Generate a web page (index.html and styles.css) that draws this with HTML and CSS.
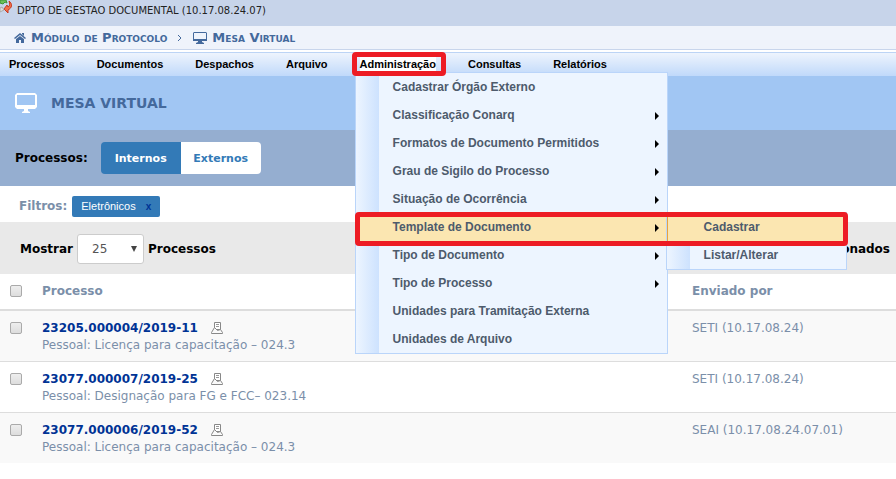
FILE: index.html
```html
<!DOCTYPE html>
<html lang="pt-BR">
<head>
    <meta charset="UTF-8">
    <meta name="viewport" content="width=device-width, initial-scale=1.0">
    <title>Mesa Virtual</title>
    <link rel="stylesheet" href="styles.css">
</head>
<body>
    <header class="unidade">
        <svg class="icone-unidade" width="12" height="14" viewBox="0 0 12 14" aria-hidden="true">
            <path d="M0 0h6l1 3-2-1-2 2-3-1z" fill="#6cc05a" stroke="#3d9637"/>
            <path d="M9 1c4 3 3 7-1 9v3L4 9l3-4 1 2c2-1 2-3 1-6z" fill="#f2704a" stroke="#c53a22"/>
            <path d="M0 8l2-1 2 3-4 2z" fill="#ddd" stroke="#aaa"/>
        </svg>
        <span>DPTO DE GESTAO DOCUMENTAL (10.17.08.24.07)</span>
    </header>

    <div class="caminho">
        <svg width="12" height="12" viewBox="0 0 12 12" aria-hidden="true">
            <path d="M6 1l6 5-1 1-5-4-5 4-1-1zM8 1h2v3L8 2z" fill="#44699c"/>
            <path d="M6 4l4 3v4H7V8H5v3H2V7z" fill="#44699c"/>
        </svg>
        <a href="#">Módulo de Protocolo</a>
        <svg class="seta-caminho" width="6" height="8" viewBox="0 0 6 8" aria-hidden="true">
            <path d="M1 1l3 3-3 3" fill="none" stroke="#44699c"/>
        </svg>
        <svg width="14" height="12" viewBox="0 0 14 12" aria-hidden="true">
            <path d="M1 0h12l1 1v8H0V1zM1 1v6h12V1zM5 9h4v1l2 1v1H3v-1l2-1z" fill="#44699c" fill-rule="evenodd"/>
        </svg>
        <a href="#">Mesa Virtual</a>
    </div>

    <nav class="menu">
        <ul class="menu-barra">
            <li><a href="#">Processos</a></li>
            <li><a href="#">Documentos</a></li>
            <li><a href="#">Despachos</a></li>
            <li><a href="#">Arquivo</a></li>
            <li class="aberto">
                <a href="#">Administração</a>
                <ul class="submenu submenu-admin">
                    <li><a href="#">Cadastrar Órgão Externo</a></li>
                    <li class="com-filhos"><a href="#">Classificação Conarq</a></li>
                    <li class="com-filhos"><a href="#">Formatos de Documento Permitidos</a></li>
                    <li class="com-filhos"><a href="#">Grau de Sigilo do Processo</a></li>
                    <li class="com-filhos"><a href="#">Situação de Ocorrência</a></li>
                    <li class="com-filhos ativo">
                        <a href="#">Template de Documento</a>
                        <ul class="submenu submenu-template">
                            <li class="ativo"><a href="#">Cadastrar</a></li>
                            <li><a href="#">Listar/Alterar</a></li>
                        </ul>
                        <span class="destaque destaque-item"></span>
                    </li>
                    <li class="com-filhos"><a href="#">Tipo de Documento</a></li>
                    <li class="com-filhos"><a href="#">Tipo de Processo</a></li>
                    <li><a href="#">Unidades para Tramitação Externa</a></li>
                    <li><a href="#">Unidades de Arquivo</a></li>
                </ul>
                <span class="destaque destaque-menu"></span>
            </li>
            <li><a href="#">Consultas</a></li>
            <li><a href="#">Relatórios</a></li>
        </ul>
    </nav>

    <main>
        <div class="titulo">
            <svg width="22" height="20" viewBox="0 0 22 20" aria-hidden="true">
                <path d="M2 0h18l2 2v12l-2 2H2l-2-2V2zM2 2v10h18V2zM9 16h4v2l2 1v1H7v-1l2-1z" fill="#fff" fill-rule="evenodd"/>
            </svg>
            <h1>MESA VIRTUAL</h1>
        </div>

        <div class="tipos">
            <span>Processos:</span>
            <div class="grupo-botoes">
                <button type="button" class="selecionado">Internos</button>
                <button type="button">Externos</button>
            </div>
        </div>

        <div class="filtros">
            <span>Filtros:</span>
            <span class="etiqueta">Eletrônicos <button type="button" aria-label="Remover filtro">x</button></span>
        </div>

        <div class="paginacao">
            <label for="quantidade">Mostrar</label>
            <div class="caixa-select">
                <select id="quantidade">
                    <option>10</option>
                    <option selected>25</option>
                    <option>50</option>
                </select>
            </div>
            <span>Processos</span>
            <span class="selecionados">Selecionados</span>
        </div>

        <table>
            <thead>
                <tr>
                    <th class="col-check"><input type="checkbox" aria-label="Selecionar todos"></th>
                    <th>Processo</th>
                    <th class="col-enviado">Enviado por</th>
                </tr>
            </thead>
            <tbody>
                <tr>
                    <td><input type="checkbox" aria-label="Selecionar 23205.000004/2019-11"></td>
                    <td>
                        <a href="#">23205.000004/2019-11</a>
                        <svg class="icone-doc" width="14" height="14" viewBox="0 0 14 14" aria-hidden="true"><use href="#doc"/></svg>
                        <p>Pessoal: Licença para capacitação – 024.3</p>
                    </td>
                    <td>SETI (10.17.08.24)</td>
                </tr>
                <tr>
                    <td><input type="checkbox" aria-label="Selecionar 23077.000007/2019-25"></td>
                    <td>
                        <a href="#">23077.000007/2019-25</a>
                        <svg class="icone-doc" width="14" height="14" viewBox="0 0 14 14" aria-hidden="true"><use href="#doc"/></svg>
                        <p>Pessoal: Designação para FG e FCC– 023.14</p>
                    </td>
                    <td>SETI (10.17.08.24)</td>
                </tr>
                <tr>
                    <td><input type="checkbox" aria-label="Selecionar 23077.000006/2019-52"></td>
                    <td>
                        <a href="#">23077.000006/2019-52</a>
                        <svg class="icone-doc" width="14" height="14" viewBox="0 0 14 14" aria-hidden="true"><use href="#doc"/></svg>
                        <p>Pessoal: Licença para capacitação – 024.3</p>
                    </td>
                    <td>SEAI (10.17.08.24.07.01)</td>
                </tr>
            </tbody>
        </table>
    </main>

    <!-- Ícone de documento reutilizado nas linhas -->
    <svg class="simbolos" aria-hidden="true">
        <symbol id="doc" viewBox="0 0 14 14">
            <path d="M4.500 1.500h6v7h-6z" fill="#fff" stroke="#888"/>
            <path d="M6 3.500h3M6 5.500h3" stroke="#999"/>
            <path d="M4.500 6.500l-3 5v1h11v-1l-2-3-3 1z" fill="#fafafa" stroke="#888"/>
        </symbol>
    </svg>
</body>
</html>
```
FILE: styles.css
```css
body {
    font-family: Verdana, "DejaVu Sans", sans-serif;
    font-size: 12px;
    line-height: 18px;
    margin: 0;
    background-color: #fff;
    color: #7b8fa9;
}
a {
    text-decoration: none;
}
ul {
    list-style: none;
    margin: 0;
    padding: 0;
}
.simbolos {
    display: block;
    width: 0;
    height: 0;
}

/* Topo */
.unidade {
    display: flex;
    align-items: flex-start;
    gap: 5px;
    height: 26px;
    background-color: #c7d4ea;
    color: #222;
    font-size: 10px;
    line-height: 22px;
}
.caminho {
    display: flex;
    align-items: center;
    gap: 5px;
    height: 23px;
    padding: 0 14px;
    background-color: #eff3fb;
    border-bottom: 1px solid #c8d5ec;
    font-size: 13px;
    font-variant: small-caps;
    font-weight: bold;
    line-height: 26px;
}
.caminho a {
    color: #44699c;
}
.seta-caminho {
    margin: 0 5px;
}

/* Menu */
.menu {
    margin-top: 2px;
    border-top: 1px solid #bcd4f5;
    background: linear-gradient(#eef4fd, #c0d9fa);
    font-family: Arial, "Liberation Sans", sans-serif;
    font-weight: bold;
}
.menu-barra {
    display: flex;
    gap: 32px;
    padding: 0 9px;
    font-size: 11px;
    line-height: 23px;
}
.menu-barra a {
    display: block;
    color: #000;
}
.aberto {
    position: relative;
    background-color: #fff;
}
.submenu {
    position: absolute;
    border: 1px solid #bad5fa;
    background: linear-gradient(to right, #edf5ff, #cde2fe) 0 0 / 23px 100% no-repeat #edf5ff;
    font-size: 12px;
    line-height: 28px;
}
.submenu-admin {
    top: 19px;
    left: -5px;
    width: 311px;
    z-index: 2;
}
.submenu a {
    padding-left: 37px;
    color: #4d5b6c;
}
.submenu li {
    position: relative;
}
.submenu .ativo {
    background-color: #fbe6b1;
}
.com-filhos::after {
    content: "";
    position: absolute;
    top: 11px;
    right: 8px;
    border: 4px solid transparent;
    border-right-width: 0;
    border-left-color: #000;
}
.submenu-template {
    top: -1px;
    left: 310px;
    width: 179px;
}
.submenu-template .ativo {
    border-left: 1px solid #e8a33d;
}
.submenu-template .ativo a {
    padding-left: 36px;
}
.destaque {
    position: absolute;
    border: 5px solid #ed1c24;
    border-radius: 4px;
    pointer-events: none;
    z-index: 3;
}
.destaque-menu {
    inset: -1px -10px 0 -8px;
}
.destaque-item {
    top: -1px;
    left: -1px;
    width: 483px;
    height: 24px;
}

/* Mesa virtual */
.titulo {
    display: flex;
    align-items: center;
    gap: 14px;
    height: 54px;
    padding: 0 15px;
    background-color: #a1c6f3;
}
h1 {
    margin: 0;
    color: #44699c;
    font-size: 14px;
}
.tipos {
    display: flex;
    align-items: center;
    gap: 13px;
    padding: 12px 15px;
    background-color: #95aed0;
    color: #000;
    font-weight: bold;
}
.grupo-botoes {
    display: flex;
    border-radius: 4px;
    overflow: hidden;
}
.grupo-botoes button {
    min-width: 80px;
    height: 32px;
    padding: 0 12px;
    border: 0;
    background-color: #fff;
    color: #337ab7;
    font: bold 11px Verdana, "DejaVu Sans", sans-serif;
}
.grupo-botoes .selecionado {
    background-color: #337ab7;
    color: #fff;
}
.filtros {
    display: flex;
    align-items: center;
    gap: 5px;
    height: 36px;
    padding: 4px 19px 0;
    box-sizing: border-box;
    font-weight: bold;
}
.etiqueta {
    display: flex;
    gap: 10px;
    padding: 0 9px;
    border-radius: 2px;
    background-color: #337ab7;
    color: #fff;
    font: 11px/21px Arial, "Liberation Sans", sans-serif;
}
.etiqueta button {
    padding: 0;
    border: 0;
    background: none;
    color: #003395;
    font: bold 10px Arial, "Liberation Sans", sans-serif;
}
.paginacao {
    display: flex;
    align-items: center;
    gap: 4px;
    height: 52px;
    padding: 2px 6px 0 20px;
    box-sizing: border-box;
    background-color: #e9e9e9;
    color: #000;
    font-weight: bold;
}
.caixa-select {
    position: relative;
}
.caixa-select::after {
    content: "";
    position: absolute;
    top: 12px;
    right: 7px;
    border: 3px solid transparent;
    border-top: 6px solid #444;
    border-bottom: 0;
}
select {
    appearance: none;
    width: 67px;
    height: 30px;
    padding: 0 14px;
    border: 1px solid #ccc;
    border-radius: 3px;
    background-color: #fff;
    color: #555;
    font: 12px Verdana, "DejaVu Sans", sans-serif;
}
.selecionados {
    margin-left: auto;
}

/* Tabela */
table {
    width: 100%;
    border-collapse: collapse;
    table-layout: fixed;
}
th, td {
    padding: 0;
    text-align: left;
    vertical-align: top;
}
th {
    height: 27px;
    padding-top: 8px;
    border-bottom: 2px solid #ddd;
}
td {
    height: 42px;
    padding-top: 8px;
    border-top: 1px solid #ddd;
}
tbody tr:first-child td {
    border-top: 0;
}
tbody tr:nth-child(odd) {
    background-color: #f9f9f9;
}
.col-check {
    width: 42px;
}
.col-enviado {
    width: 204px;
}
td a {
    margin-right: 8px;
    color: #003395;
    font-weight: bold;
}
td p {
    margin: 0;
    line-height: 16px;
}
.icone-doc {
    vertical-align: -3px;
}
input[type="checkbox"] {
    appearance: none;
    display: block;
    width: 12px;
    height: 12px;
    box-sizing: border-box;
    margin: 3px 0 0 10px;
    border: 1px solid #aaa;
    border-radius: 2px;
    background: linear-gradient(#eee, #ddd);
}
```
